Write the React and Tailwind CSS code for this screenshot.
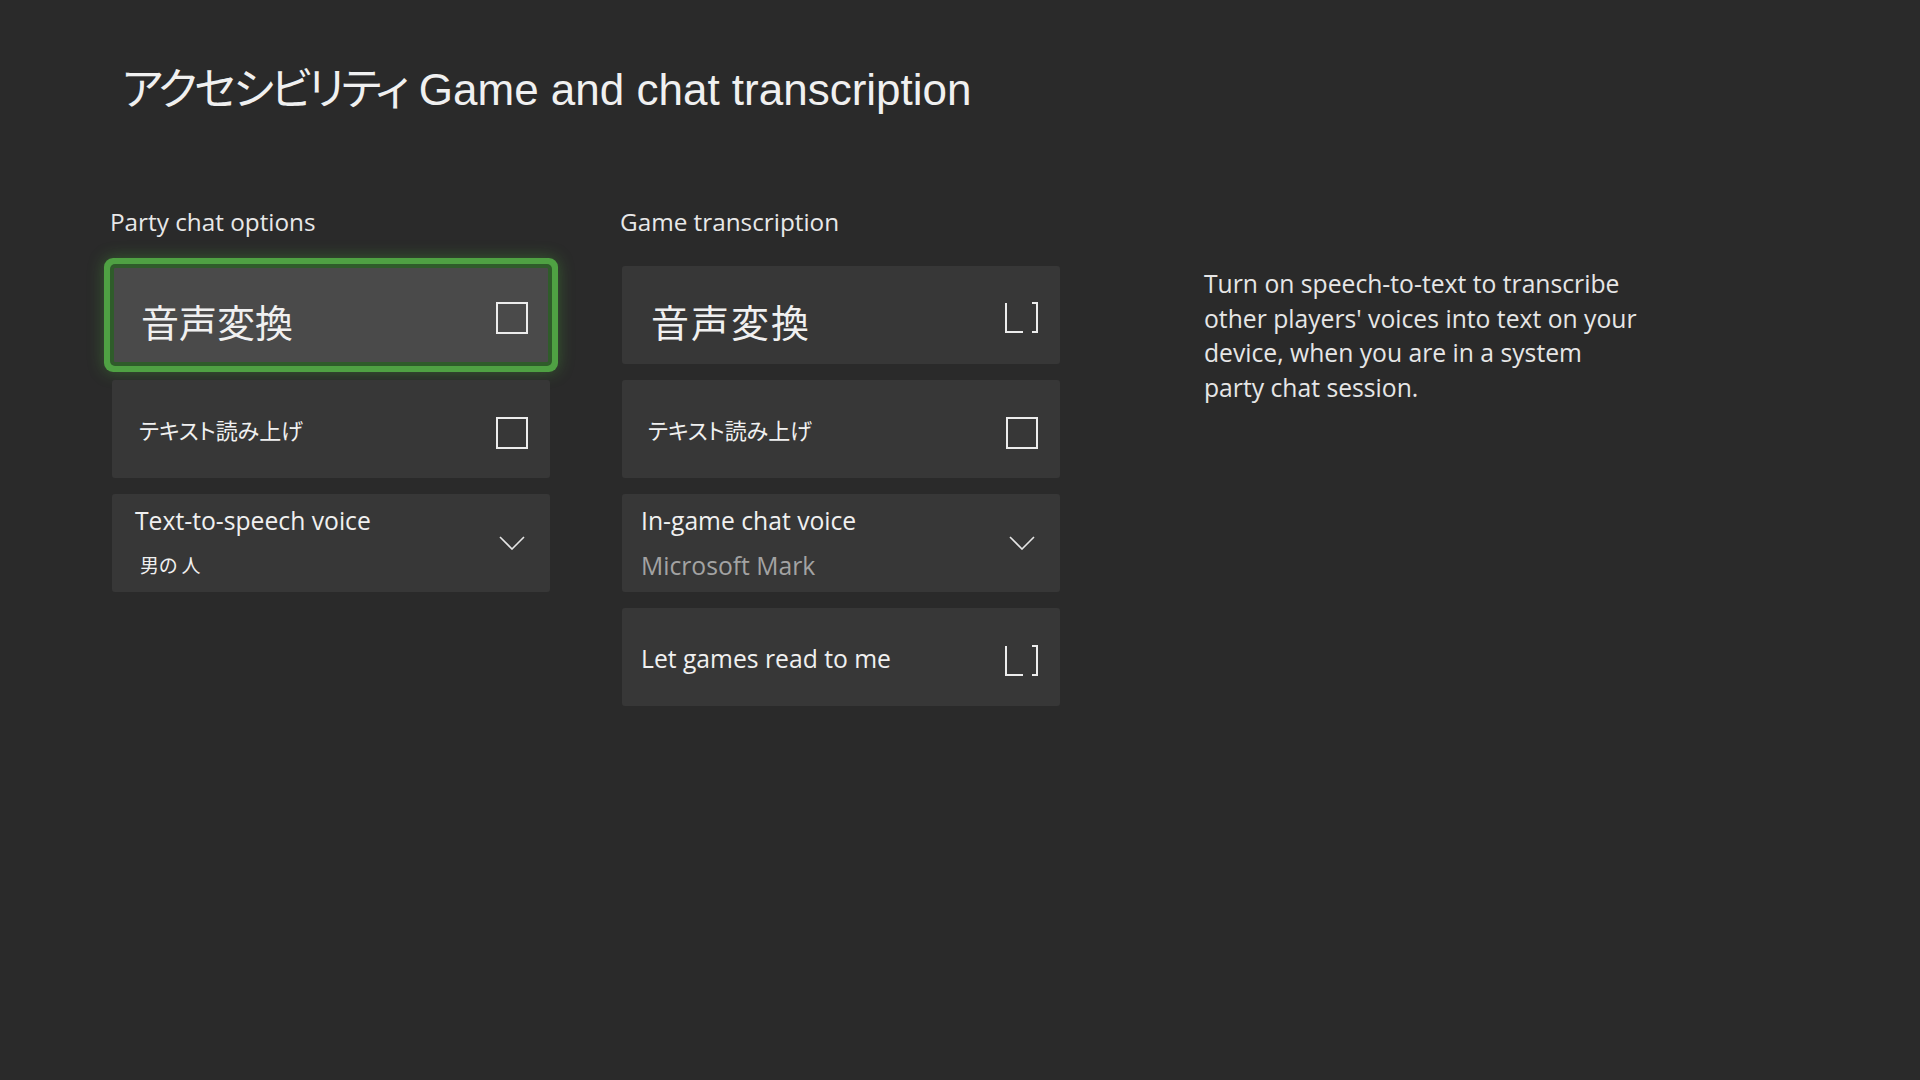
import React from 'react';

const sans = "font-['Open_Sans','Noto_Sans_CJK_JP',sans-serif]";
const jp = "font-['Noto_Sans_CJK_JP','Noto_Sans',sans-serif] [font-feature-settings:'palt']";

function Box() {
    return <div className="w-[32px] h-[32px] border-[2px] border-[#ececec] flex-shrink-0" />;
}

function Brackets() {
    return (
        <svg width="35" height="32" viewBox="0 0 35 32" fill="none" stroke="#ececec" strokeWidth="2" className="flex-shrink-0">
            <path d="M2 1 V30 H19" />
            <path d="M28 1 H33 V30 H28" />
        </svg>
    );
}

function Chevron() {
    return (
        <svg width="26" height="14" viewBox="0 0 26 14" fill="none" stroke="#e6e6e6" strokeWidth="1.6" className="flex-shrink-0">
            <path d="M1 1 L13 13 L25 1" />
        </svg>
    );
}

export default function App() {
    return (
        <div className={`min-h-screen w-full bg-[#2a2a2a] text-[#f0f0f0] ${sans}`}>
            {/* Title */}
            <h1 className="pt-[62px] pl-[122px] text-[44px] leading-[48px] font-normal font-['Liberation_Sans','Noto_Sans_CJK_JP',sans-serif] whitespace-nowrap">
                <span className={`${jp} tracking-[-3px]`}>アクセシビリティ</span> Game and chat transcription
            </h1>

            <div className="flex pl-[112px] mt-[92px]">
                {/* Party chat options */}
                <section className="w-[438px] flex-shrink-0">
                    <h2 className="-ml-[2px] text-[24.3px] leading-[32px] text-[#e8e8e8]">Party chat options</h2>
                    <div className="flex flex-col gap-4 mt-[28px]">
                        <div className="h-[98px] bg-[#4a4a4a] rounded-[3px] flex items-center justify-between pl-[29px] pr-[22px] shadow-[inset_0_0_0_2px_#2f5c2a,0_0_0_2px_#2f5c2a,0_0_0_8px_#4fa143,0_0_16px_8px_rgba(80,190,60,0.35)]">
                            <span className={`${jp} text-[38px] leading-none pt-[12px]`}>音声変換</span>
                            <div className="mt-[5px]"><Box /></div>
                        </div>
                        <div className="h-[98px] bg-[#373737] rounded-[3px] flex items-center justify-between pl-[27px] pr-[22px]">
                            <span className={`${jp} text-[22px] leading-none`}>テキスト読み上げ</span>
                            <div className="mt-[7px]"><Box /></div>
                        </div>
                        <div className="h-[98px] bg-[#373737] rounded-[3px] flex items-center justify-between pl-[23px] pr-[25px]">
                            <div className="flex flex-col pt-[11px] self-start">
                                <span className="text-[24.7px] leading-[32px]">Text-to-speech voice</span>
                                <span className={`${jp} text-[19px] leading-[28px] mt-[14px] pl-[5px]`}>男の 人</span>
                            </div>
                            <Chevron />
                        </div>
                    </div>
                </section>

                {/* Game transcription */}
                <section className="w-[438px] flex-shrink-0 ml-[72px]">
                    <h2 className="-ml-[2px] text-[24.3px] leading-[32px] text-[#e8e8e8]">Game transcription</h2>
                    <div className="flex flex-col gap-4 mt-[28px]">
                        <div className="h-[98px] bg-[#373737] rounded-[3px] flex items-center justify-between pl-[29px] pr-[21px]">
                            <span className={`${jp} text-[38px] leading-none pt-[12px] tracking-[2px]`}>音声変換</span>
                            <div className="mt-[5px]"><Brackets /></div>
                        </div>
                        <div className="h-[98px] bg-[#373737] rounded-[3px] flex items-center justify-between pl-[26px] pr-[22px]">
                            <span className={`${jp} text-[22px] leading-none`}>テキスト読み上げ</span>
                            <div className="mt-[7px]"><Box /></div>
                        </div>
                        <div className="h-[98px] bg-[#373737] rounded-[3px] flex items-center justify-between pl-[19px] pr-[25px]">
                            <div className="flex flex-col pt-[11px] self-start">
                                <span className="text-[24.7px] leading-[32px]">In-game chat voice</span>
                                <span className="text-[24.7px] leading-[32px] mt-[13px] text-[#a3a3a3]">Microsoft Mark</span>
                            </div>
                            <Chevron />
                        </div>
                        <div className="h-[98px] bg-[#373737] rounded-[3px] flex items-center justify-between pl-[19px] pr-[21px]">
                            <span className="text-[24.7px] leading-[32px] pt-[4px]">Let games read to me</span>
                            <div className="mt-[7px]"><Brackets /></div>
                        </div>
                    </div>
                </section>

                {/* Description */}
                <p className="ml-[144px] mt-[61px] w-[470px] text-[24.7px] leading-[34.5px] text-[#e6e6e6] whitespace-nowrap">
                    Turn on speech-to-text to transcribe<br />
                    other players' voices into text on your<br />
                    device, when you are in a system<br />
                    party chat session.
                </p>
            </div>
        </div>
    );
}
